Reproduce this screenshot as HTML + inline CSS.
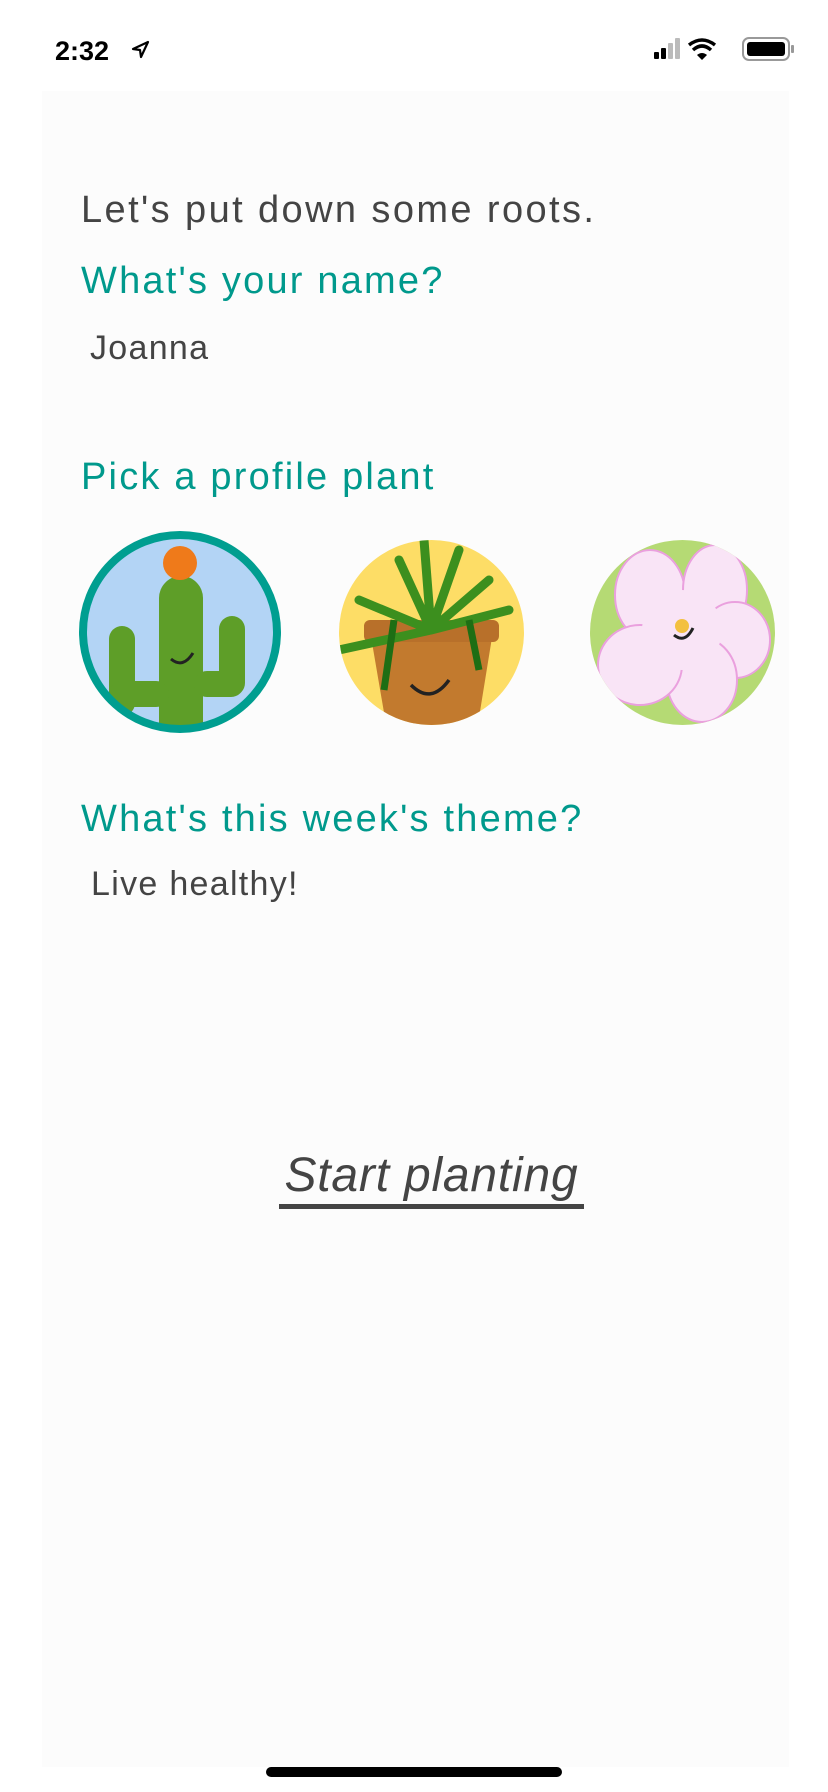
<!DOCTYPE html>
<html><head><meta charset="utf-8"><style>
*{margin:0;padding:0;box-sizing:border-box}
body{width:828px;height:1792px;background:#fff;position:relative;overflow:hidden;font-family:"Liberation Sans",sans-serif}
.panel{position:absolute;left:42px;top:91px;width:747px;height:1676px;background:#fcfcfc}
.t{position:absolute;white-space:nowrap;line-height:1}
.g{color:#444}
.teal{color:#00998c}
</style></head><body>
<div class="panel"></div>
<div class="t" style="left:55px;top:38px;font-size:27px;font-weight:bold;color:#000">2:32</div>
<svg style="position:absolute;left:131px;top:40px" width="20" height="20" viewBox="0 0 20 20"><path d="M17 2 L2 9 L9 10 L10 17 Z" fill="none" stroke="#000" stroke-width="2.2" stroke-linejoin="round"/></svg>
<svg style="position:absolute;left:652px;top:36px" width="145" height="28" viewBox="0 0 145 28">
<rect x="2" y="16" width="5" height="7" rx="1" fill="#000"/><rect x="9" y="12" width="5" height="11" rx="1" fill="#000"/><rect x="16" y="7" width="5" height="16" rx="1" fill="#bbb"/><rect x="23" y="2" width="5" height="21" rx="1" fill="#bbb"/>
<path d="M37 9 Q50 -1 63 9" fill="none" stroke="#000" stroke-width="3.5"/><path d="M41 14 Q50 6 59 14" fill="none" stroke="#000" stroke-width="3.5"/><path d="M45 19 L50 24 L55 19 Q50 15 45 19Z" fill="#000"/>
<rect x="91" y="2" width="46" height="22" rx="6" fill="none" stroke="#999" stroke-width="2"/><rect x="95" y="6" width="38" height="14" rx="3" fill="#000"/><rect x="139" y="9" width="3" height="8" rx="1" fill="#999"/>
</svg>
<div class="t g" style="left:81px;top:191px;font-size:38px;letter-spacing:2.4px">Let's put down some roots.</div>
<div class="t teal" style="left:81px;top:262px;font-size:38px;letter-spacing:2.2px">What's your name?</div>
<div class="t g" style="left:90px;top:331px;font-size:34px;letter-spacing:1.3px">Joanna</div>
<div class="t teal" style="left:81px;top:458px;font-size:38px;letter-spacing:2.2px">Pick a profile plant</div>
<svg style="position:absolute;left:79px;top:531px" width="202" height="202" viewBox="0 0 202 202">
<defs><clipPath id="c1"><circle cx="101" cy="101" r="94"/></clipPath></defs>
<circle cx="101" cy="101" r="94" fill="#b3d4f5"/>
<g clip-path="url(#c1)">
<rect x="80" y="45" width="44" height="170" rx="22" fill="#5e9e28"/>
<rect x="30" y="95" width="26" height="90" rx="13" fill="#5e9e28"/>
<rect x="30" y="150" width="60" height="26" rx="13" fill="#5e9e28"/>
<rect x="140" y="85" width="26" height="80" rx="13" fill="#5e9e28"/>
<rect x="115" y="140" width="50" height="26" rx="13" fill="#5e9e28"/>
<circle cx="101" cy="32" r="17" fill="#ef7a1a"/>
<path d="M92 128 Q104 138 114 122" fill="none" stroke="#222" stroke-width="3"/>
</g>
<circle cx="101" cy="101" r="97" fill="none" stroke="#009e90" stroke-width="8"/>
</svg>
<svg style="position:absolute;left:339px;top:540px" width="185" height="185" viewBox="0 0 185 185">
<defs><clipPath id="c2"><circle cx="92.5" cy="92.5" r="92.5"/></clipPath></defs>
<circle cx="92.5" cy="92.5" r="92.5" fill="#fddd66"/>
<g clip-path="url(#c2)">
<path d="M30 85 L155 85 L138 190 L48 190Z" fill="#c27a2e"/>
<rect x="25" y="80" width="135" height="22" rx="6" fill="#b8702a"/>
<path d="M92 90 L85 0 M92 90 L60 20 M92 90 L120 10 M92 90 L150 40 M92 90 L20 60 M92 90 L170 70 M92 90 L0 110" stroke="#3c8f1e" stroke-width="9" stroke-linecap="round"/>
<path d="M55 80 L45 150 M130 80 L140 130" stroke="#1e6e14" stroke-width="7"/>
<path d="M72 145 Q92 165 110 140" fill="none" stroke="#222" stroke-width="3.5"/>
</g></svg>
<svg style="position:absolute;left:590px;top:540px" width="185" height="185" viewBox="0 0 185 185">
<defs><clipPath id="c3"><circle cx="92.5" cy="92.5" r="92.5"/></clipPath></defs>
<circle cx="92.5" cy="92.5" r="92.5" fill="#b5da74"/>
<g clip-path="url(#c3)" fill="#f9e4f6" stroke="#eaa0de" stroke-width="2">
<ellipse cx="60" cy="55" rx="35" ry="45"/><ellipse cx="125" cy="50" rx="32" ry="45"/><ellipse cx="145" cy="100" rx="35" ry="38"/><ellipse cx="112" cy="140" rx="35" ry="42"/><ellipse cx="50" cy="125" rx="42" ry="40"/><circle cx="92" cy="90" r="40" stroke="none"/>
</g>
<circle cx="92" cy="86" r="7" fill="#f3c040"/>
<path d="M84 95 Q95 104 103 88" fill="none" stroke="#222" stroke-width="3"/>
</svg>
<div class="t teal" style="left:81px;top:800px;font-size:38px;letter-spacing:2.2px">What's this week's theme?</div>
<div class="t g" style="left:91px;top:867px;font-size:34px;letter-spacing:1.3px">Live healthy!</div>
<div class="t g" style="left:271px;top:1152px;width:321px;text-align:center;font-size:48px;font-style:italic;letter-spacing:0.8px">Start planting</div>
<div style="position:absolute;left:279px;top:1204px;width:305px;height:5px;background:#444"></div>
<div style="position:absolute;left:266px;top:1767px;width:296px;height:10px;border-radius:5px;background:#000"></div>
</body></html>
